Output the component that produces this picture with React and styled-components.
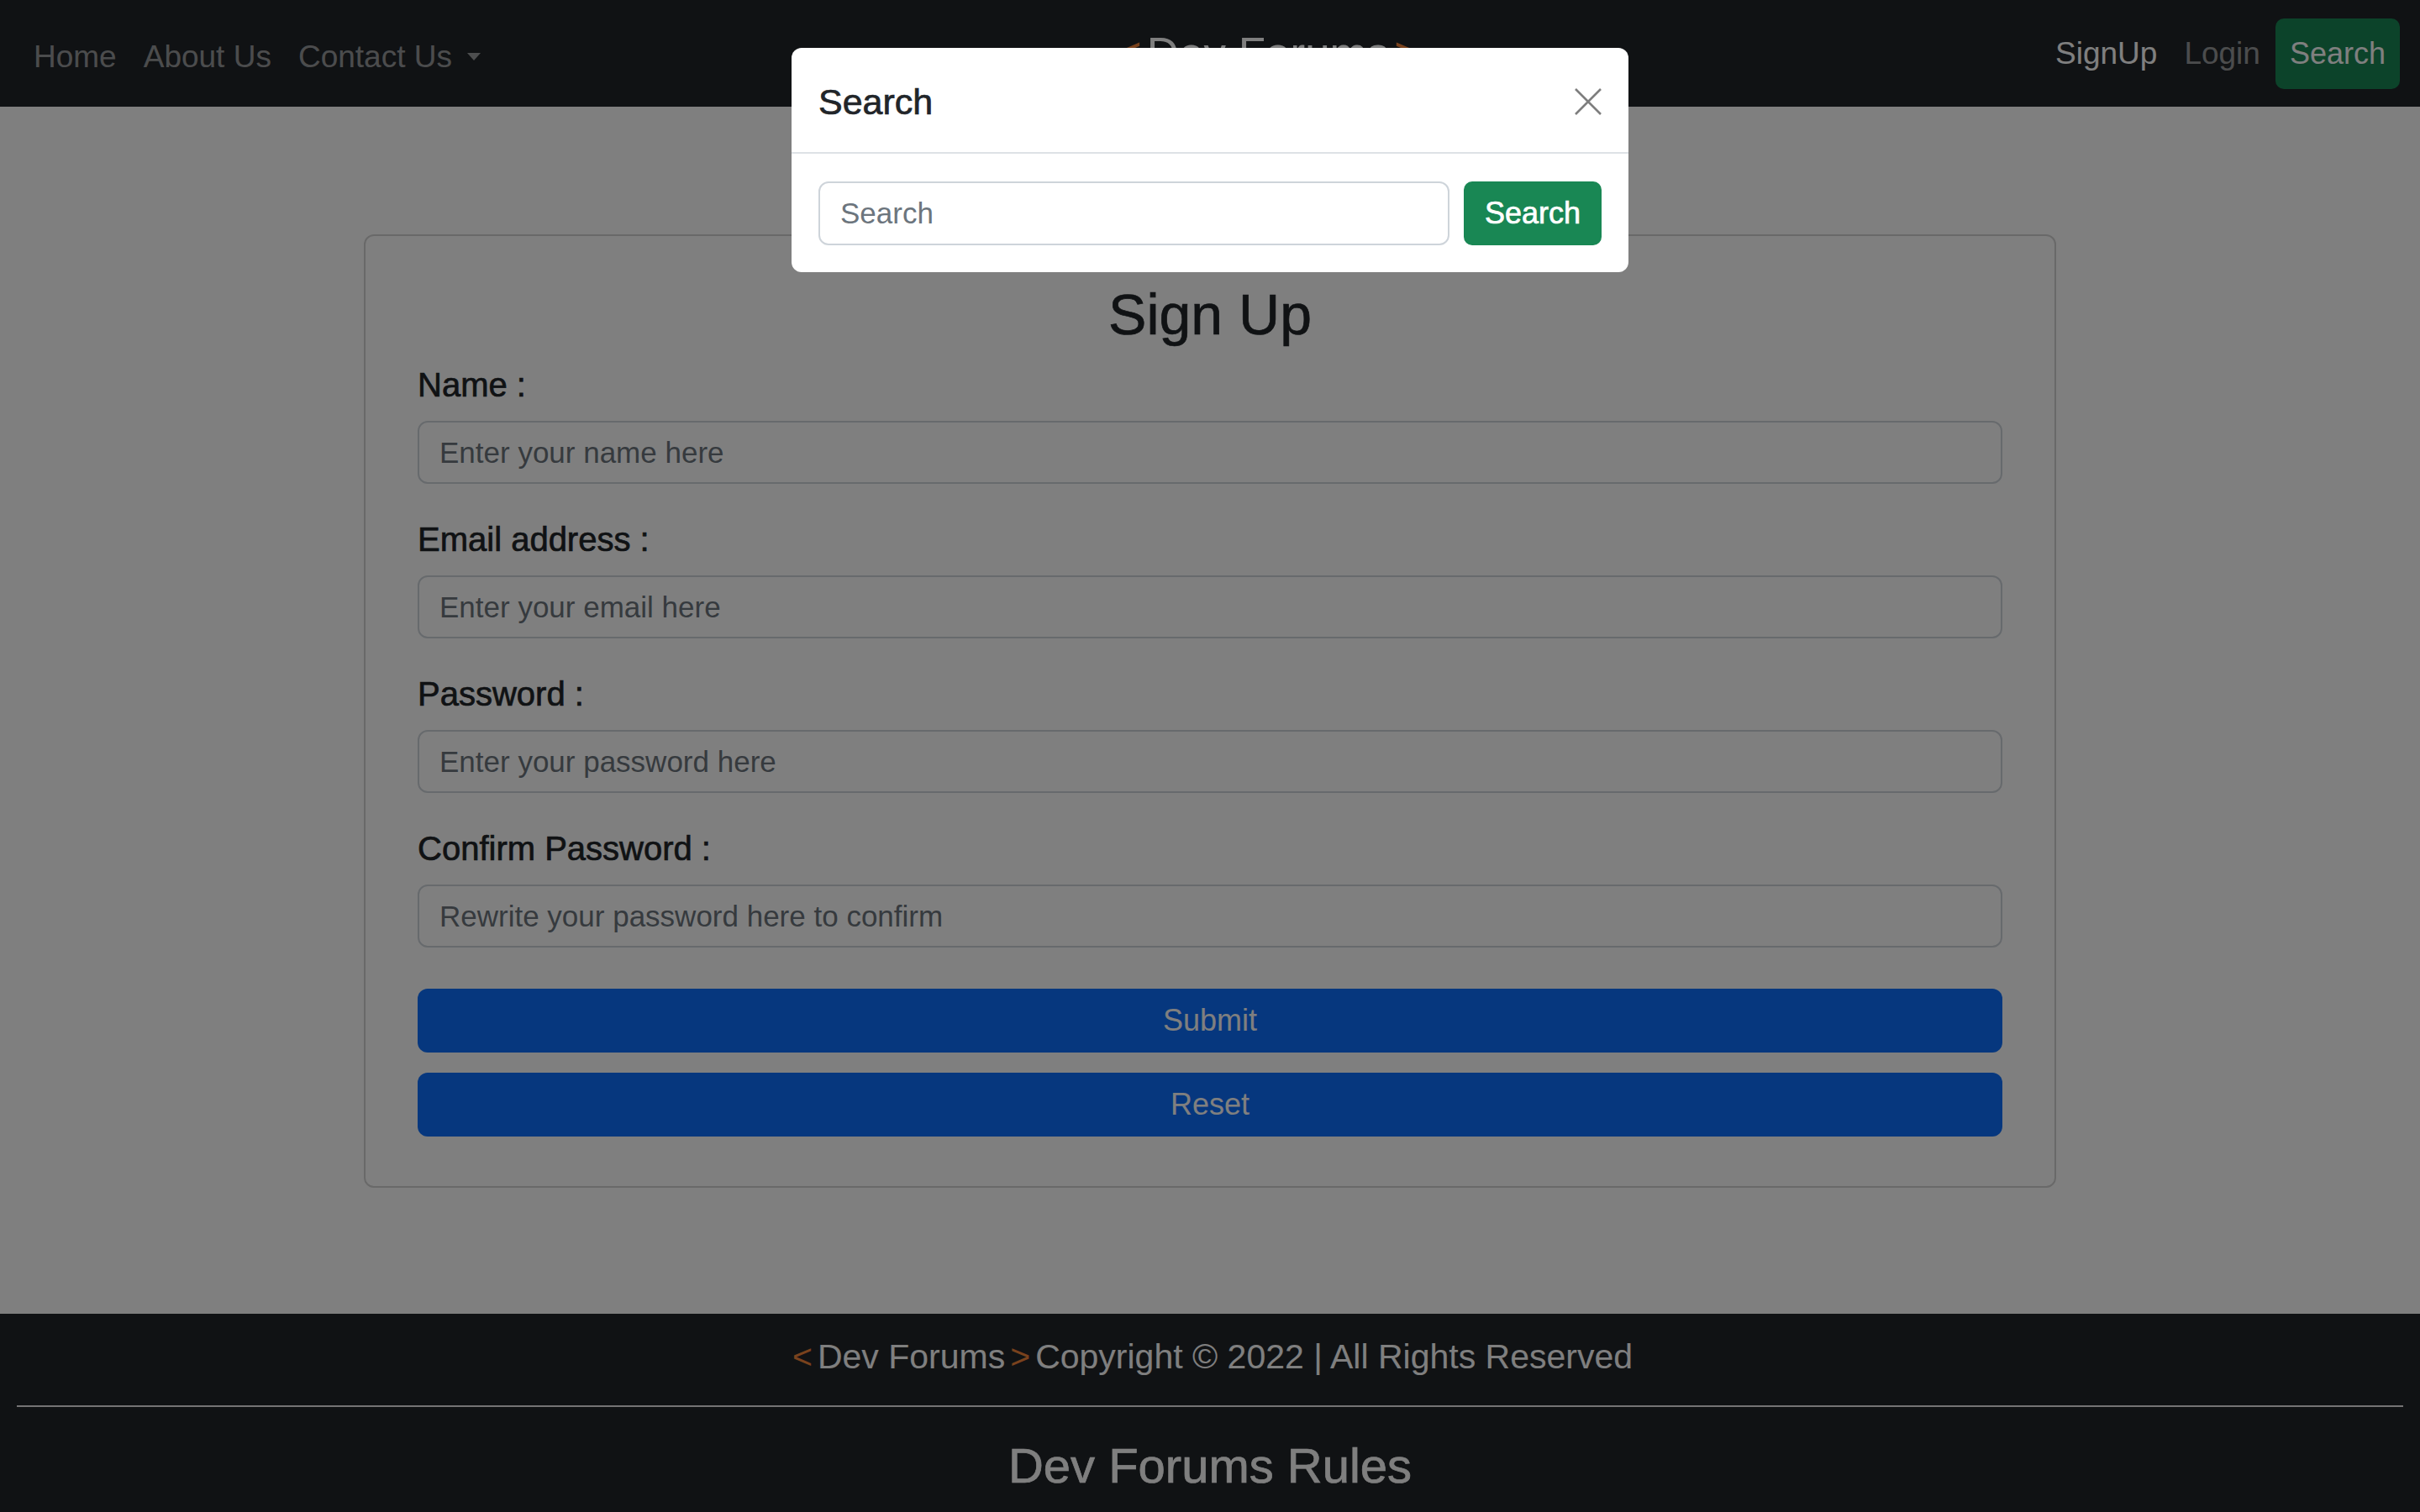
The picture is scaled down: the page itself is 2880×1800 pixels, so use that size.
import React from 'react'
import styled, { createGlobalStyle, css } from 'styled-components'

const GlobalStyle = createGlobalStyle`
  * { box-sizing: border-box; }
  body {
    margin: 0;
    background: #fff;
    color: #212529;
    font-family: "Liberation Sans", Arial, sans-serif;
  }
`;

// the original font has a 500 weight, Liberation Sans does not
const medium = css`
  -webkit-text-stroke: 0.7px currentColor;
`;

const Navbar = styled.nav`
  height: 127px;
  background: #212529;
  display: flex;
  align-items: center;
  padding: 0 24px;
`;

const NavList = styled.div`
  display: flex;
  align-items: center;
  margin-top: 8px;
`;

const NavLink = styled.a`
  font-size: 37px;
  line-height: 48px;
  padding: 0 16px;
  color: ${(p) => (p.$active ? '#fff' : 'rgba(255, 255, 255, 0.55)')};
  text-decoration: none;
  display: flex;
  align-items: center;
`;

const Caret = styled.span`
  display: inline-block;
  margin-left: 18px;
  border-top: 9px solid currentColor;
  border-left: 8px solid transparent;
  border-right: 8px solid transparent;
`;

const Brand = styled.a`
  margin: 0 auto;
  font-size: 53px;
  line-height: 60px;
  color: #fff;
  text-decoration: none;
`;

const Bracket = styled.span`
  color: #f2843a;
  margin: 0 6px;
`;

const NavRight = styled.div`
  display: flex;
  align-items: center;
`;

const GreenButton = styled.button`
  font-family: inherit;
  font-size: 36px;
  line-height: 48px;
  color: #fff;
  background: #198754;
  border: none;
  border-radius: 10px;
  padding: 18px 17px;
  margin-left: 2px;
`;

const ModalButton = styled(GreenButton)`
  width: 164px;
  height: 76px;
  padding: 0;
  margin: 0;
  ${medium}
`;

const Main = styled.main`
  padding: 152px 0 150px;
`;

const Card = styled.div`
  width: 2014px;
  margin: 0 auto;
  border: 2px solid rgba(0, 0, 0, 0.175);
  border-radius: 12px;
  padding: 52px 62px 59px;
`;

const Heading = styled.h2`
  margin: 0 0 19px;
  text-align: center;
  font-size: 68px;
  line-height: 82px;
  font-weight: 400;
  ${medium}
`;

const Group = styled.div`
  margin-bottom: ${(p) => (p.$last ? '49px' : '42px')};
`;

const Label = styled.label`
  display: block;
  font-size: 40px;
  line-height: 48px;
  margin-bottom: 19px;
  ${medium}
`;

const Input = styled.input`
  display: block;
  width: 100%;
  height: 75px;
  border: 2px solid #ced4da;
  border-radius: 12px;
  padding: 0 24px;
  font-family: inherit;
  font-size: 35px;
  color: #212529;
  background: #fff;
  &::placeholder {
    color: #6c757d;
  }
`;

const SearchInput = styled(Input)`
  flex: 1;
  height: 76px;
`;

const PrimaryButton = styled.button`
  display: block;
  width: 100%;
  height: 76px;
  margin-top: ${(p) => (p.$gap ? '24px' : '0')};
  border: none;
  border-radius: 12px;
  background: #0d6efd;
  color: #fff;
  font-family: inherit;
  font-size: 36px;
`;

const Footer = styled.footer`
  background: #212529;
  color: #fff;
  text-align: center;
  padding: 27px 0 60px;
`;

const Copy = styled.p`
  margin: 0;
  font-size: 41px;
  line-height: 48px;
`;

const Rule = styled.hr`
  margin: 34px 20px 35px;
  border: none;
  border-top: 2px solid rgba(255, 255, 255, 0.9);
`;

const RulesTitle = styled.h3`
  margin: 0;
  font-size: 58px;
  line-height: 70px;
  font-weight: 400;
  ${medium}
`;

const Backdrop = styled.div`
  position: fixed;
  inset: 0;
  background: rgba(0, 0, 0, 0.5);
  z-index: 10;
`;

const ModalWrap = styled.div`
  position: fixed;
  inset: 0;
  z-index: 11;
  display: flex;
  justify-content: center;
  align-items: flex-start;
  padding-top: 57px;
`;

const Dialog = styled.div`
  width: 996px;
  background: #fff;
  border-radius: 12px;
`;

const ModalHeader = styled.div`
  display: flex;
  align-items: center;
  justify-content: space-between;
  padding: 34px 32px 30px;
  border-bottom: 2px solid #dee2e6;
`;

const ModalTitle = styled.h5`
  margin: 0;
  font-size: 43px;
  line-height: 60px;
  font-weight: 400;
  ${medium}
`;

const CloseButton = styled.button`
  width: 32px;
  height: 32px;
  padding: 0;
  border: none;
  background: none;
  opacity: 0.5;
  display: flex;
`;

const ModalBody = styled.form`
  display: flex;
  gap: 17px;
  padding: 33px 32px 32px;
`;

export default function App() {
  return (
    <>
      <GlobalStyle />
      <Navbar>
        <NavList>
          <NavLink href="#">Home</NavLink>
          <NavLink href="#">About Us</NavLink>
          <NavLink href="#">Contact Us<Caret /></NavLink>
        </NavList>
        <Brand href="#"><Bracket>&lt;</Bracket>Dev Forums<Bracket>&gt;</Bracket></Brand>
        <NavRight>
          <NavLink href="#" $active>SignUp</NavLink>
          <NavLink href="#">Login</NavLink>
          <GreenButton>Search</GreenButton>
        </NavRight>
      </Navbar>

      <Main>
        <Card>
          <Heading>Sign Up</Heading>
          <Group>
            <Label>Name :</Label>
            <Input placeholder="Enter your name here" />
          </Group>
          <Group>
            <Label>Email address :</Label>
            <Input placeholder="Enter your email here" />
          </Group>
          <Group>
            <Label>Password :</Label>
            <Input type="password" placeholder="Enter your password here" />
          </Group>
          <Group $last>
            <Label>Confirm Password :</Label>
            <Input type="password" placeholder="Rewrite your password here to confirm" />
          </Group>
          <PrimaryButton>Submit</PrimaryButton>
          <PrimaryButton $gap>Reset</PrimaryButton>
        </Card>
      </Main>

      <Footer>
        <Copy><Bracket>&lt;</Bracket>Dev Forums<Bracket>&gt;</Bracket>Copyright © 2022 | All Rights Reserved</Copy>
        <Rule />
        <RulesTitle>Dev Forums Rules</RulesTitle>
      </Footer>

      <Backdrop />
      <ModalWrap>
        <Dialog>
          <ModalHeader>
            <ModalTitle>Search</ModalTitle>
            <CloseButton aria-label="Close">
              <svg width="32" height="32" viewBox="0 0 32 32">
                <path d="M1 1 L31 31 M31 1 L1 31" stroke="#000" strokeWidth="2.6" fill="none" />
              </svg>
            </CloseButton>
          </ModalHeader>
          <ModalBody>
            <SearchInput placeholder="Search" />
            <ModalButton>Search</ModalButton>
          </ModalBody>
        </Dialog>
      </ModalWrap>
    </>
  );
}
